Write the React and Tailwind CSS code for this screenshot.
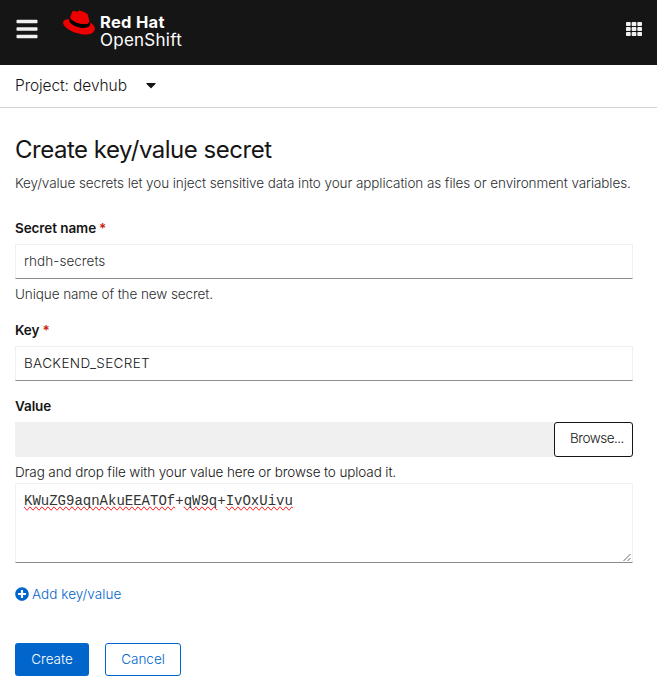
import React from "react";
import { FaBars, FaTh, FaCaretDown, FaPlusCircle } from "react-icons/fa";

function HatLogo() {
  return (
    <svg viewBox="0 0 192 145" className="h-[25px] w-[32px] shrink-0">
      <path
        fill="#ee0000"
        d="M127.47,83.49c12.51,0,30.61-2.58,30.61-17.46a14,14,0,0,0-.31-3.42l-7.45-32.36c-1.72-7.12-3.23-10.35-15.73-16.6C124.89,8.69,103.76.5,97.51.5,91.69.5,90,8,83.06,8c-6.68,0-11.64-5.6-17.89-5.6-6,0-9.91,4.09-12.93,12.5,0,0-8.41,23.72-9.49,27.16A6.43,6.43,0,0,0,42.53,44c0,9.22,36.3,39.45,84.94,39.45M160,72.07c1.73,8.19,1.73,9.05,1.73,10.13,0,14-15.74,21.77-36.43,21.77C78.54,104,37.58,76.6,37.58,58.49a18.45,18.45,0,0,1,1.51-7.33C22.27,52,.5,55,.5,74.22c0,31.48,74.59,70.28,133.65,70.28,45.28,0,56.7-20.48,56.7-36.65,0-12.72-11-27.16-30.83-35.78"
      />
      <path
        fill="#000"
        d="M160,72.07c1.73,8.19,1.73,9.05,1.73,10.13,0,14-15.74,21.77-36.43,21.77C78.54,104,37.58,76.6,37.58,58.49a18.45,18.45,0,0,1,1.51-7.33l3.66-9.06A6.43,6.43,0,0,0,42.53,44c0,9.22,36.3,39.45,84.94,39.45,12.51,0,30.61-2.58,30.61-17.46a14,14,0,0,0-.31-3.42Z"
      />
    </svg>
  );
}

function Label({ children, required }) {
  return (
    <div className="flex h-5 items-center gap-[3px] text-[13.5px] font-semibold text-[#151515]">
      <span>{children}</span>
      {required && <span className="text-[#c9190b]">*</span>}
    </div>
  );
}

function Field({ children }) {
  return (
    <div className="mt-1.5 flex h-[35px] items-center border border-[#f0f0f0] border-b-[#8a8d90] px-2">
      {children}
    </div>
  );
}

function Misspelled({ children }) {
  return <span className="[text-decoration-line:spelling-error]">{children}</span>;
}

export default function App() {
  return (
    <div className="h-[689px] w-[657px] overflow-hidden bg-white font-['Inter','Liberation_Sans',sans-serif] text-[13.5px] font-[350] tracking-[-0.085px] whitespace-nowrap text-[#2c2e30]">
      <header className="flex h-[65px] items-start bg-[#151515] pr-[15px] pl-4 text-white">
        <FaBars className="mt-[17px] h-6 w-[22px] text-[#f0f0f0]" />
        <div className="ml-[25px] flex pt-[9.5px]">
          <HatLogo />
          <div className="ml-[5px] pt-[3px]">
            <div className="h-[18px] text-[16.5px] leading-[18px] font-bold tracking-[0.3px]">Red Hat</div>
            <div className="h-[18px] text-[17px] leading-[18px] font-normal tracking-[0.25px]">OpenShift</div>
          </div>
        </div>
        <FaTh className="mt-[20px] ml-auto h-[18px] w-4 text-[#f0f0f0]" />
      </header>
      <div className="flex h-[43px] items-center border-b border-[#d2d2d2] px-[15px] text-[#151515]">
        <span className="w-[112px] text-[15.5px]">Project: devhub</span>
        <FaCaretDown className="mb-0.5 ml-[19px] h-4 w-[10px]" />
      </div>
      <main className="flex flex-col pr-6 pl-[15px]">
        <h1 className="mt-[26px] h-8 text-[24px] leading-8 font-normal tracking-[-0.02em] text-[#151515]">
          Create key/value secret
        </h1>
        <p className="mt-[7px] h-5 leading-5">
          Key/value secrets let you inject sensitive data into your application as files or environment variables.
        </p>
        <div className="mt-[25px]">
          <Label required>Secret name</Label>
          <Field>
            <span className="tracking-[0.05px]">rhdh-secrets</span>
          </Field>
          <p className="mt-[5px] h-5 leading-5">Unique name of the new secret.</p>
        </div>
        <div className="mt-4">
          <Label required>Key</Label>
          <Field>
            <span className="tracking-[0.35px] text-[#151515]">BACKEND_SECRET</span>
          </Field>
        </div>
        <div className="mt-[15px]">
          <Label>Value</Label>
          <div className="mt-1.5 flex h-[35px] bg-[#f0f0f0]">
            <button className="ml-auto h-[35px] w-[79px] rounded-[3px] border border-[#151515] bg-white pb-0.5 pl-[7px] tracking-[-0.5px] text-[#151515]">
              Browse...
            </button>
          </div>
          <p className="mt-[5px] h-5 leading-5 tracking-[-0.11px] text-[#151515]">
            Drag and drop file with your value here or browse to upload it.
          </p>
          <div className="mt-px flex h-20 justify-between border border-[#f0f0f0] border-b-[#8a8d90] pl-2">
            <div className="mt-[7px] h-[21px] font-['Liberation_Mono',monospace] text-[14px] leading-[21px] tracking-normal text-[#333]">
              <Misspelled>KWuZG9aqnAkuEEATOf</Misspelled>+<Misspelled>qW9q</Misspelled>+
              <Misspelled>IvOxUivu</Misspelled>
            </div>
            <svg viewBox="0 0 9 9" className="h-[9px] w-[9px] self-end" stroke="#555" strokeWidth="0.9">
              <path d="M0.5 8 7.5 1M4.5 8 7.5 5" />
            </svg>
          </div>
        </div>
        <button className="mt-[21px] flex h-5 items-center gap-[3px] self-start text-[#0066cc]">
          <FaPlusCircle className="h-[14px] w-[14px]" />
          <span className="tracking-[0.05px]">Add key/value</span>
        </button>
        <div className="mt-[39px] flex gap-4">
          <button className="h-[33px] w-[74px] rounded-[3px] bg-[#0066cc] tracking-normal text-white">Create</button>
          <button className="h-[33px] w-[76px] rounded-[3px] border border-[#0066cc] tracking-normal text-[#0066cc]">Cancel</button>
        </div>
      </main>
    </div>
  );
}
